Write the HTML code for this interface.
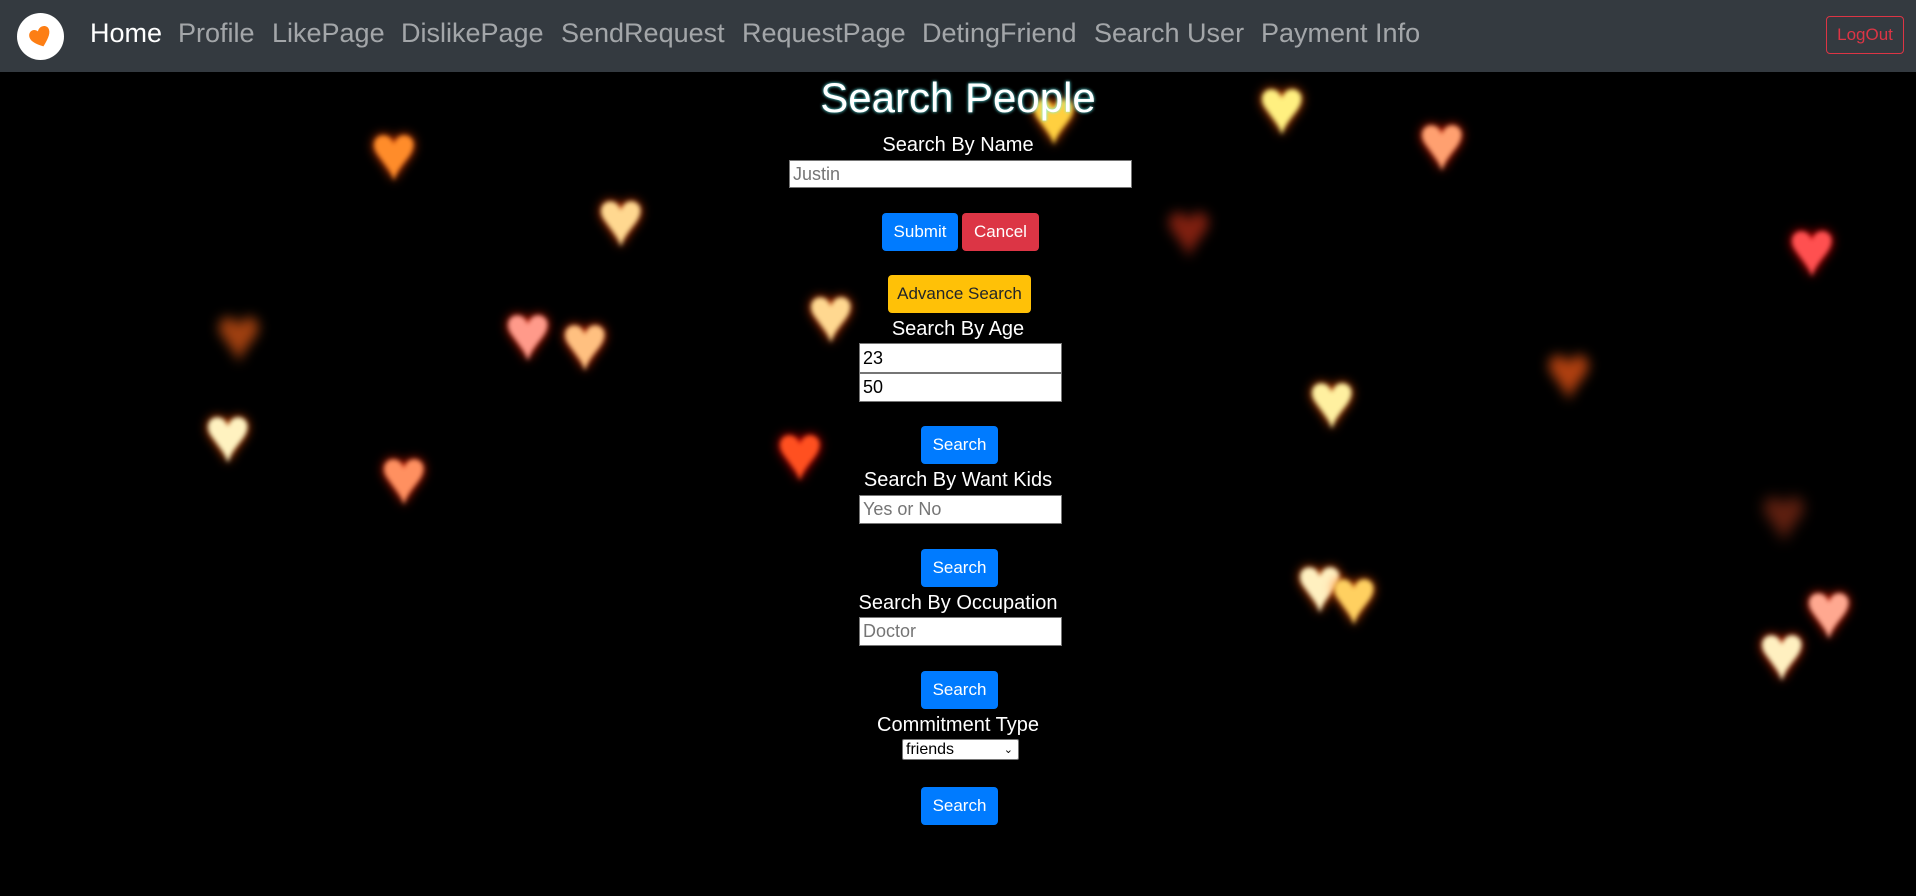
<!DOCTYPE html>
<html><head><meta charset="utf-8"><style>
*{margin:0;padding:0;box-sizing:border-box}
body{width:1916px;height:896px;background:#000;font-family:"Liberation Sans",Arial,sans-serif;position:relative;overflow:hidden}
.nav{position:absolute;left:0;top:0;width:1916px;height:72px;background:#343a40;z-index:2}
.logo{position:absolute;left:17px;top:13px;width:47px;height:47px;border-radius:50%;background:#fff}
.nav a{position:absolute;top:18px;font-size:27px;color:rgba(255,255,255,.55);text-decoration:none;white-space:nowrap}
.nav a.act{color:#fff}
.logout{position:absolute;left:1826px;top:16px;width:78px;height:38px;border:1px solid #dc3545;border-radius:4px;color:#dc3545;font-size:17px;text-align:center;line-height:36px}
.h{position:absolute;color:#ffb070;font-size:80px;line-height:1;margin:-15px 0 0 -10px;filter:blur(2.5px);z-index:0}
.t{position:absolute;left:0;width:1916px;text-align:center;color:#fff;z-index:1}
.in{position:absolute;background:#fff;border:1px solid #767676;font-size:18px;padding-left:3px;color:#757575;z-index:1;display:flex;align-items:center}
.b{position:absolute;border-radius:4px;color:#fff;background:#007bff;font-size:17px;text-align:center;z-index:1;display:flex;align-items:center;justify-content:center}
</style></head><body>
<div class="h" style="left:380px;top:128px;color:#ff8c2a;text-shadow:0 0 10px #f40">♥</div>
<div class="h" style="left:607px;top:194px;color:#ffd890;text-shadow:0 0 10px #f40">♥</div>
<div class="h" style="left:817px;top:290px;color:#ffd890;text-shadow:0 0 10px #f40">♥</div>
<div class="h" style="left:514px;top:308px;color:#ff9a8a;text-shadow:0 0 10px #f20">♥</div>
<div class="h" style="left:571px;top:318px;color:#ffc080;text-shadow:0 0 10px #f30">♥</div>
<div class="h" style="left:214px;top:410px;color:#fff2c0;text-shadow:0 0 10px #f50">♥</div>
<div class="h" style="left:390px;top:452px;color:#ff9060;text-shadow:0 0 10px #f20">♥</div>
<div class="h" style="left:786px;top:428px;color:#ff5020;text-shadow:0 0 10px #f00">♥</div>
<div class="h" style="left:1268px;top:82px;color:#fff080;text-shadow:0 0 10px #f50">♥</div>
<div class="h" style="left:1040px;top:92px;color:#ffd040;text-shadow:0 0 10px #f50">♥</div>
<div class="h" style="left:1428px;top:118px;color:#ffa070;text-shadow:0 0 10px #f20">♥</div>
<div class="h" style="left:1798px;top:224px;color:#ff5050;text-shadow:0 0 10px #f00">♥</div>
<div class="h" style="left:1318px;top:376px;color:#fff0a0;text-shadow:0 0 10px #f50">♥</div>
<div class="h" style="left:1306px;top:560px;color:#fff0c0;text-shadow:0 0 10px #f50">♥</div>
<div class="h" style="left:1340px;top:572px;color:#ffd060;text-shadow:0 0 10px #f50">♥</div>
<div class="h" style="left:1815px;top:586px;color:#ffa890;text-shadow:0 0 10px #f20">♥</div>
<div class="h" style="left:1768px;top:628px;color:#fff0c0;text-shadow:0 0 10px #f30">♥</div>
<div class="h" style="left:1555px;top:348px;color:#b04010;filter:blur(6px)">♥</div>
<div class="h" style="left:225px;top:310px;color:#a04010;filter:blur(6px)">♥</div>
<div class="h" style="left:1175px;top:205px;color:#802010;filter:blur(6px)">♥</div>
<div class="h" style="left:1770px;top:490px;color:#602010;filter:blur(7px)">♥</div>

<div class="nav">
<div class="logo"><svg width="47" height="47" viewBox="0 0 47 47"><path d="M13 21c0-6 7-8 10-3c3-5 11-4 11 2c0 5-6 10-11 14c-5-4-10-8-10-13z" fill="#fd7e14" transform="rotate(-20 23 24)"/></svg></div>
<a class="act" style="left:90px">Home</a>
<a style="left:178px">Profile</a>
<a style="left:272px">LikePage</a>
<a style="left:401px">DislikePage</a>
<a style="left:561px">SendRequest</a>
<a style="left:742px">RequestPage</a>
<a style="left:922px">DetingFriend</a>
<a style="left:1094px">Search User</a>
<a style="left:1261px">Payment Info</a>
<div class="logout">LogOut</div>
</div>

<div class="t" style="top:74px;font-size:42px;text-shadow:0 0 3px #6ff">Search People</div>
<div class="t" style="top:134px;font-size:20px">Search By Name</div>
<div class="in" style="left:789px;top:160px;width:343px;height:28px">Justin</div>
<div class="b" style="left:882px;top:213px;width:76px;height:38px">Submit</div>
<div class="b" style="left:962px;top:213px;width:77px;height:38px;background:#dc3545">Cancel</div>
<div class="b" style="left:888px;top:275px;width:143px;height:38px;background:#ffc107;color:#212529">Advance Search</div>
<div class="t" style="top:318px;font-size:20px">Search By Age</div>
<div class="in" style="left:859px;top:343px;width:203px;height:30px;color:#000">23</div>
<div class="in" style="left:859px;top:373px;width:203px;height:29px;color:#000">50</div>
<div class="b" style="left:921px;top:426px;width:77px;height:38px">Search</div>
<div class="t" style="top:469px;font-size:20px">Search By Want Kids</div>
<div class="in" style="left:859px;top:495px;width:203px;height:29px">Yes or No</div>
<div class="b" style="left:921px;top:549px;width:77px;height:38px">Search</div>
<div class="t" style="top:592px;font-size:20px">Search By Occupation</div>
<div class="in" style="left:859px;top:617px;width:203px;height:29px">Doctor</div>
<div class="b" style="left:921px;top:671px;width:77px;height:38px">Search</div>
<div class="t" style="top:714px;font-size:20px">Commitment Type</div>
<div class="in" style="left:902px;top:739px;width:117px;height:21px;color:#000;font-size:16px;border-radius:2px">friends<span style="position:absolute;right:5px;font-size:11px">&#8964;</span></div>
<div class="b" style="left:921px;top:787px;width:77px;height:38px">Search</div>
</body></html>
